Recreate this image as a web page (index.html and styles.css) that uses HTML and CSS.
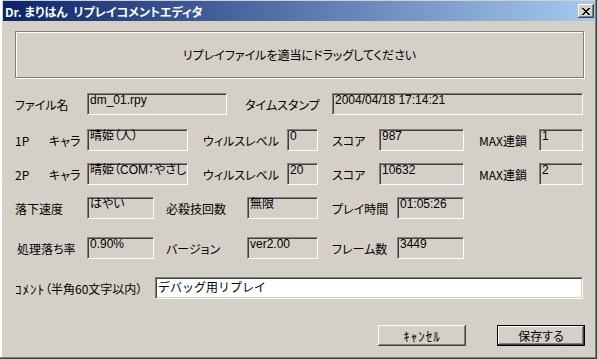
FILE: index.html
```html
<!DOCTYPE html>
<html lang="ja">
<head>
    <meta charset="UTF-8">
    <title>Dr. まりはん リプレイコメントエディタ</title>
    <link rel="stylesheet" href="styles.css">
</head>
<body>
    <div class="window">
        <!-- Title bar -->
        <div class="titlebar">
            <span class="title">Dr. まりはん&nbsp;&nbsp;リプレイコメントエディタ</span>
            <button class="close" title="閉じる">
                <svg width="8" height="7" viewBox="0 0 8 7" shape-rendering="crispEdges">
                    <path d="M0 0h2v1H0z M6 0h2v1H6z M1 1h2v1H1z M5 1h2v1H5z M2 2h4v1H2z M3 3h2v1H3z M2 4h4v1H2z M1 5h2v1H1z M5 5h2v1H5z M0 6h2v1H0z M6 6h2v1H6z" fill="#000"/>
                </svg>
            </button>
        </div>

        <div class="client">
            <!-- Drop target -->
            <div class="dropzone">リプレイファイルを適当にドラッグしてください</div>

            <!-- File info -->
            <div class="row row-file">
                <span class="lbl">ファイル名</span>
                <div class="field">dm_01.rpy</div>
                <span class="lbl pl-18">タイムスタンプ</span>
                <div class="field">2004/04/18 17:14:21</div>
            </div>

            <!-- Players -->
            <div class="row row-player gap-14">
                <span class="lbl">1P</span>
                <span class="lbl">キャラ</span>
                <div class="field">晴姫（人）</div>
                <span class="lbl pl-15">ウィルスレベル</span>
                <div class="field">0</div>
                <span class="lbl pl-14">スコア</span>
                <div class="field">987</div>
                <span class="lbl pl-15">MAX連鎖</span>
                <div class="field">1</div>
            </div>
            <div class="row row-player gap-12">
                <span class="lbl">2P</span>
                <span class="lbl">キャラ</span>
                <div class="field">晴姫（COM：やさしい）</div>
                <span class="lbl pl-15">ウィルスレベル</span>
                <div class="field">20</div>
                <span class="lbl pl-14">スコア</span>
                <div class="field">10632</div>
                <span class="lbl pl-15">MAX連鎖</span>
                <div class="field">2</div>
            </div>

            <!-- Game settings -->
            <div class="row row-game gap-12">
                <span class="lbl">落下速度</span>
                <div class="field">はやい</div>
                <span class="lbl pl-12">必殺技回数</span>
                <div class="field">無限</div>
                <span class="lbl pl-14">プレイ時間</span>
                <div class="field">01:05:26</div>
            </div>
            <div class="row row-game gap-18">
                <span class="lbl pl-2">処理落ち率</span>
                <div class="field">0.90%</div>
                <span class="lbl pl-12">バージョン</span>
                <div class="field">ver2.00</div>
                <span class="lbl pl-14">フレーム数</span>
                <div class="field">3449</div>
            </div>

            <!-- Comment -->
            <div class="row row-comment gap-18">
                <span class="lbl"><span class="hw">ｺﾒﾝﾄ</span>（半角60文字以内）</span>
                <div class="field edit">デバッグ用リプレイ</div>
            </div>

            <div class="buttons">
                <button class="btn"><span class="hw">ｷｬﾝｾﾙ</span></button>
                <button class="btn default">保存する</button>
            </div>
        </div>
    </div>
</body>
</html>
```

FILE: styles.css
```css
/* Classic Windows dialog */
body {
    margin: 0;
    background-color: #d4d0c8;
    font-family: "Noto Sans CJK JP", "Liberation Sans", sans-serif;
    font-size: 12px;
    font-feature-settings: "palt";
    color: #000;
}
.window {
    width: 597px;
    height: 359px;
    box-sizing: border-box;
    padding: 1px 2px 2px 3px;
    box-shadow: inset -1px -1px #404040, inset -2px -2px #808080, inset 2px 0 #fff;
}
.titlebar {
    height: 20px;
    display: flex;
    align-items: center;
    justify-content: space-between;
    padding: 0 1px 0 2px;
    background: linear-gradient(to right, #0a246a, #a6caf0);
    color: #fff;
    font-weight: bold;
}
.close {
    width: 16px;
    height: 14px;
    padding: 0;
    border: none;
    display: flex;
    align-items: center;
    justify-content: center;
    background-color: #d4d0c8;
    box-shadow: inset -1px -1px #404040, inset 1px 1px #fff, inset -2px -2px #808080;
}
.client {
    padding: 10px 0 0 12px;
}
.dropzone {
    width: 569px;
    height: 47px;
    box-sizing: border-box;
    border: 1px solid #808080;
    box-shadow: inset 1px 1px #fff, 1px 1px #fff;
    display: flex;
    align-items: center;
    justify-content: center;
}
.row {
    display: grid;
    align-items: center;
    height: 22px;
    margin-top: 15px;
}
.gap-12 { margin-top: 12px; }
.gap-14 { margin-top: 14px; }
.gap-18 { margin-top: 18px; }
.row-file { grid-template-columns: 72px 140px 105px 251px; }
.row-player { grid-template-columns: 34px 38px 101px 99px 31px 61px 85px 75px 44px; }
.row-game { grid-template-columns: 72px 67px 93px 71px 79px 67px; }
.row-comment { grid-template-columns: 140px 428px; }
.lbl {
    white-space: nowrap;
}
.pl-2 { padding-left: 2px; }
.pl-12 { padding-left: 12px; }
.pl-14 { padding-left: 14px; }
.pl-15 { padding-left: 15px; }
.pl-18 { padding-left: 18px; }
/* half-width katakana */
.hw {
    font-size: 13px;
    font-feature-settings: normal;
    letter-spacing: 1px;
}
.field {
    height: 22px;
    box-sizing: border-box;
    border: 1px solid;
    border-color: #808080 #fff #fff #808080;
    box-shadow: inset 1px 1px #404040, inset -1px -1px #d4d0c8;
    padding: 0 2px;
    font-family: "Liberation Sans", "Noto Sans CJK JP", sans-serif;
    line-height: 13px;
    white-space: nowrap;
    overflow-x: clip;
}
.field.edit {
    background-color: #fff;
    font-family: "Noto Sans CJK JP", sans-serif;
    font-feature-settings: normal;
    line-height: 17px;
}
.buttons {
    width: 570px;
    display: flex;
    justify-content: flex-end;
    gap: 31px;
    margin-top: 26px;
}
.btn {
    width: 88px;
    height: 21px;
    padding: 0;
    border: none;
    font: inherit;
    color: #000;
    background-color: #d4d0c8;
    box-shadow: inset -1px -1px #404040, inset 1px 1px #fff, inset -2px -2px #808080;
}
.btn.default {
    border: 1px solid #000;
}
```
